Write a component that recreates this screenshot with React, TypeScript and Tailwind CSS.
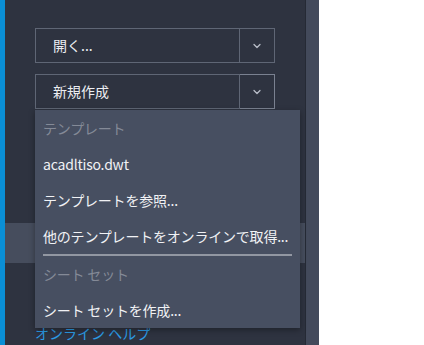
import { ChevronDown } from 'lucide-react';

const font = { fontFamily: '"Noto Sans CJK JP", "Noto Sans", sans-serif' };

function SplitButton({ label, active }: { label: string; active?: boolean }) {
  return (
    <div className="flex h-[35px] w-[240px]">
      <div className="flex flex-1 items-center border border-[#5f6675] pl-[17px] text-[14px] text-[#eceef2]">{label}</div>
      <div
        className={
          'flex w-[35px] items-center justify-center border border-l-0 ' +
          (active ? 'border-[#7a8190]' : 'border-[#5f6675]')
        }
      >
        <ChevronDown size={12} strokeWidth={2.5} className="text-[#b9bec8]" />
      </div>
    </div>
  );
}

function MenuItem({ label, header }: { label: string; header?: boolean }) {
  return (
    <div
      className={
        'flex h-[36px] items-center whitespace-nowrap px-[8px] text-[14px] tracking-[-0.2px] ' +
        (header ? 'text-[#848a97]' : 'text-[#f1f2f5]')
      }
    >
      {label}
    </div>
  );
}

export default function App() {
  return (
    <div className="flex h-[345px] w-[424px] bg-white" style={font}>
      <div className="w-[5px] bg-[#0a8fd6]" />
      <div className="relative flex w-[300px] flex-col bg-[#2e3340]">
        <div className="flex flex-col gap-[11px] pl-[30px] pt-[28px]">
          <SplitButton label="開く..." />
          <SplitButton label="新規作成" active />
        </div>
        <div className="mt-[114px] h-[40px] w-full bg-[#464d5d]" />
        <div className="mt-[60px] pl-[30px] text-[14px] leading-[20px] text-[#2b9be6]">オンライン ヘルプ</div>

        <div className="absolute left-[30px] top-[110px] w-[265px] bg-[#474f61] shadow-[0_2px_6px_rgba(0,0,0,0.35)]">
          <MenuItem label="テンプレート" header />
          <MenuItem label="acadltiso.dwt" />
          <MenuItem label="テンプレートを参照..." />
          <MenuItem label="他のテンプレートをオンラインで取得..." />
          <div className="mx-[8px] h-[2px] bg-[#9297a2]" />
          <MenuItem label="シート セット" header />
          <MenuItem label="シート セットを作成..." />
        </div>
      </div>
      <div className="w-[14px] border-l border-[#252a35] bg-[#434a5b]" />
      <div className="flex-1 bg-white" />
    </div>
  );
}
